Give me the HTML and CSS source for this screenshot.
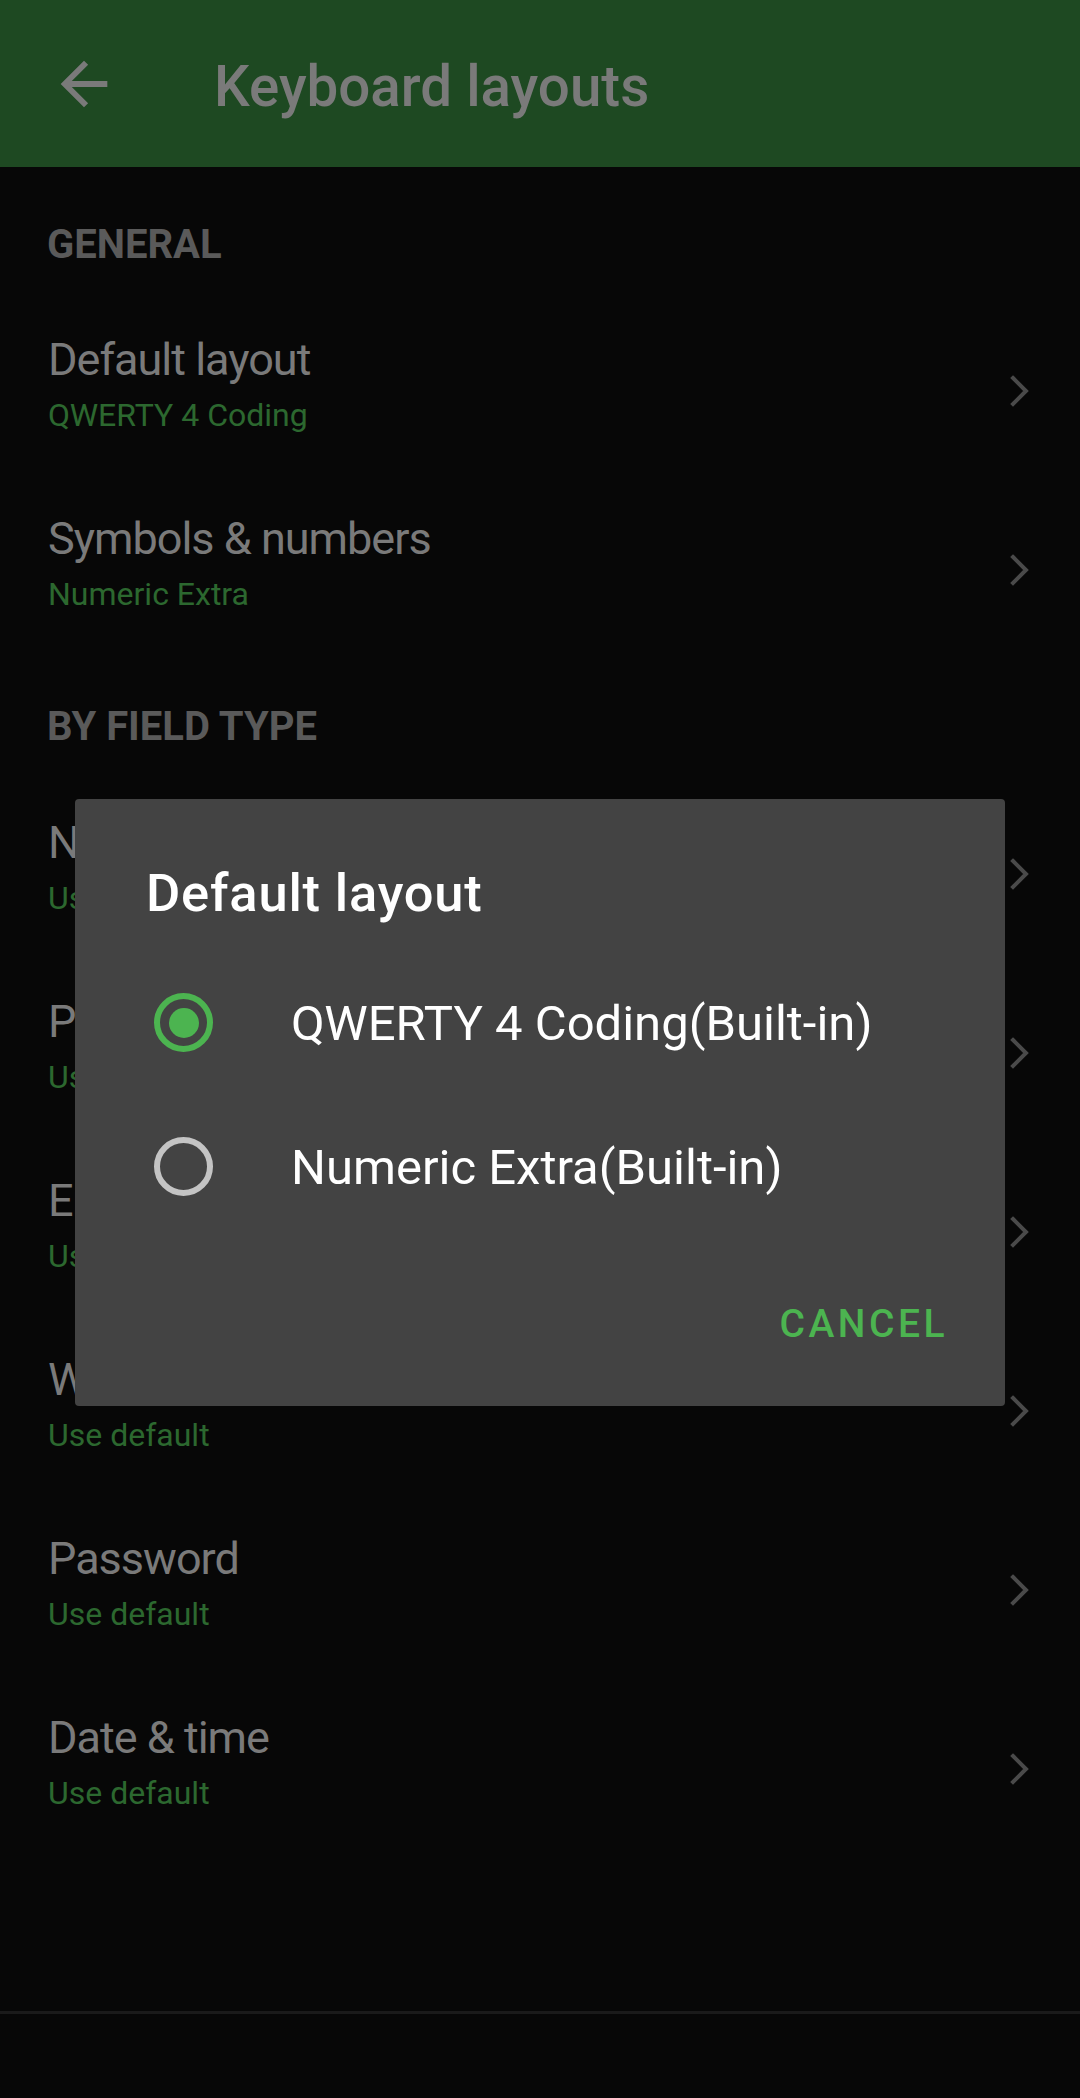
FILE: index.html
```html
<!DOCTYPE html>
<html lang="en">
<head>
<meta charset="utf-8">
<title>Keyboard layouts</title>
<link rel="stylesheet" href="styles.css">
</head>
<body>
<div class="screen">
  <header class="appbar">
    <svg class="back" viewBox="0 0 24 24" aria-hidden="true"><path d="M20 11H7.83l5.59-5.59L12 4l-8 8 8 8 1.41-1.41L7.83 13H20v-2z"/></svg>
    <h1 class="appbar-title">Keyboard layouts</h1>
  </header>

  <main class="list">
    <div class="cat first">GENERAL</div>
    <div class="row">
      <div class="texts"><div class="t">Default layout</div><div class="s">QWERTY 4 Coding</div></div>
      <svg class="chev" viewBox="0 0 20 32" aria-hidden="true"><polyline points="3,3 16,16 3,29"/></svg>
    </div>
    <div class="row">
      <div class="texts"><div class="t">Symbols &amp; numbers</div><div class="s">Numeric Extra</div></div>
      <svg class="chev" viewBox="0 0 20 32" aria-hidden="true"><polyline points="3,3 16,16 3,29"/></svg>
    </div>

    <div class="cat">BY FIELD TYPE</div>
    <div class="row">
      <div class="texts"><div class="t">Numbers</div><div class="s">Use default</div></div>
      <svg class="chev" viewBox="0 0 20 32" aria-hidden="true"><polyline points="3,3 16,16 3,29"/></svg>
    </div>
    <div class="row">
      <div class="texts"><div class="t">Phone</div><div class="s">Use default</div></div>
      <svg class="chev" viewBox="0 0 20 32" aria-hidden="true"><polyline points="3,3 16,16 3,29"/></svg>
    </div>
    <div class="row">
      <div class="texts"><div class="t">Email</div><div class="s">Use default</div></div>
      <svg class="chev" viewBox="0 0 20 32" aria-hidden="true"><polyline points="3,3 16,16 3,29"/></svg>
    </div>
    <div class="row">
      <div class="texts"><div class="t">Web address</div><div class="s">Use default</div></div>
      <svg class="chev" viewBox="0 0 20 32" aria-hidden="true"><polyline points="3,3 16,16 3,29"/></svg>
    </div>
    <div class="row">
      <div class="texts"><div class="t">Password</div><div class="s">Use default</div></div>
      <svg class="chev" viewBox="0 0 20 32" aria-hidden="true"><polyline points="3,3 16,16 3,29"/></svg>
    </div>
    <div class="row">
      <div class="texts"><div class="t">Date &amp; time</div><div class="s">Use default</div></div>
      <svg class="chev" viewBox="0 0 20 32" aria-hidden="true"><polyline points="3,3 16,16 3,29"/></svg>
    </div>
  </main>

  <footer class="bottom"></footer>

  <div class="overlay">
    <div class="dialog">
      <h2 class="dlg-title">Default layout</h2>
      <div class="options">
        <div class="option">
          <span class="radio on"><span class="dot"></span></span>
          <span class="opt-text">QWERTY 4 Coding(Built-in)</span>
        </div>
        <div class="option">
          <span class="radio"></span>
          <span class="opt-text">Numeric Extra(Built-in)</span>
        </div>
      </div>
      <div class="actions"><span class="btn">CANCEL</span></div>
    </div>
  </div>
</div>
</body>
</html>
```

FILE: styles.css
```css
* { box-sizing: border-box; }
html, body { margin: 0; padding: 0; }
body {
  width: 1080px;
  height: 2098px;
  overflow: hidden;
  background: #070707;
  font-family: Roboto, "Noto Sans", "Liberation Sans", sans-serif;
}
.screen {
  position: relative;
  width: 1080px;
  height: 2098px;
  display: flex;
  flex-direction: column;
}

/* App bar */
.appbar {
  height: 167px;
  flex: none;
  background: #1e4922;
  display: flex;
  align-items: center;
  padding-left: 49px;
}
.back {
  width: 70px;
  height: 70px;
  fill: #7a7a7a;
  flex: none;
}
.appbar-title {
  margin: 6px 0 0 95px;
  font-size: 56.5px;
  font-weight: 500;
  color: #7a7a7a;
  line-height: 64px;
}

/* List */
.list {
  flex: 1;
  display: flex;
  flex-direction: column;
}
.cat {
  padding: 44px 48px 31px 47px;
  font-size: 40px;
  line-height: 50px;
  font-weight: 700;
  color: #5a5a5a;
}
.cat.first {
  padding-top: 53px;
  padding-bottom: 30px;
}
.row {
  height: 179px;
  display: flex;
  align-items: center;
  padding: 0 50px 0 48px;
}
.texts {
  flex: 1;
  align-self: flex-start;
  display: flex;
  flex-direction: column;
  padding-top: 33px;
}
.t {
  font-size: 45px;
  line-height: 54px;
  letter-spacing: -1px;
  color: #7a7a7a;
}
.s {
  margin-top: 7px;
  font-size: 32px;
  line-height: 42px;
  color: #2c682f;
}
.chev {
  width: 20px;
  height: 32px;
  flex: none;
  margin-top: 3px;
  fill: none;
  stroke: #4a4a4a;
  stroke-width: 4;
  stroke-linecap: square;
}

.bottom {
  height: 87px;
  flex: none;
  border-top: 3px solid #1a1a1a;
}

/* Dialog */
.overlay {
  position: absolute;
  inset: 0;
  padding: 799px 75px 0;
}
.dialog {
  width: 930px;
  height: 607px;
  background: #434343;
  border-radius: 4px;
  padding-top: 62px;
  display: flex;
  flex-direction: column;
}
.dlg-title {
  margin: 0;
  padding-left: 71px;
  font-size: 52.5px;
  line-height: 64px;
  font-weight: 500;
  letter-spacing: 0.8px;
  color: #ffffff;
}
.options {
  margin-top: 26px;
  display: flex;
  flex-direction: column;
}
.option {
  height: 143.5px;
  display: flex;
  align-items: center;
  padding-left: 79px;
  gap: 78px;
}
.radio {
  width: 59px;
  height: 59px;
  flex: none;
  border-radius: 50%;
  border: 6px solid #c4c4c4;
  display: flex;
  align-items: center;
  justify-content: center;
}
.radio.on { border-color: #4cb450; }
.dot {
  width: 30px;
  height: 30px;
  border-radius: 50%;
  background: #4cb450;
}
.opt-text {
  font-size: 49px;
  line-height: 60px;
  color: #ffffff;
  margin-top: 3px;
}
.actions {
  margin-top: 61px;
  display: flex;
  justify-content: flex-end;
  padding-right: 57px;
}
.btn {
  font-size: 39px;
  line-height: 50px;
  font-weight: 500;
  letter-spacing: 3.5px;
  color: #4cb450;
}
```
